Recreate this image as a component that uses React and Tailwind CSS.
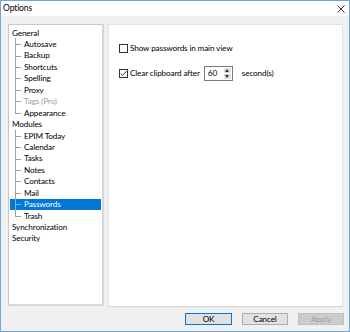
import React from "react";

const font = { fontFamily: '"Segoe UI", Lato, "Noto Sans", sans-serif' };

function Row({ label, level = 0, last = false, selected = false, disabled = false }) {
  return (
    <div
      className={`flex items-center h-[11.44px] ${selected ? "bg-[#0078d7] text-white" : disabled ? "text-[#a0a0a0]" : "text-[#000]"}`}
    >
      {level === 1 ? (
        <span className="relative self-stretch w-[9px] ml-[5px] shrink-0">
          <span className={`absolute left-0 top-0 w-px ${last ? "h-1/2" : "h-full"} ${selected ? "bg-[#7fb6e8]" : "bg-[#a0a0a0]"}`} />
          <span className={`absolute left-0 top-1/2 w-[6px] h-px ${selected ? "bg-[#7fb6e8]" : "bg-[#a0a0a0]"}`} />
        </span>
      ) : (
        <span className="w-[2px] shrink-0" />
      )}
      <span className="whitespace-nowrap leading-none">{label}</span>
    </div>
  );
}

function Checkbox({ checked }) {
  return (
    <span className="w-[9px] h-[9px] border border-[#333] bg-white flex items-center justify-center shrink-0">
      {checked && (
        <svg width="7" height="7" viewBox="0 0 7 7">
          <path d="M0.8 3.6 L2.7 5.5 L6.3 1.2" fill="none" stroke="#222" strokeWidth="0.9" />
        </svg>
      )}
    </span>
  );
}

export default function App() {
  return (
    <div
      className="w-[350px] h-[332px] border border-[#6ca7df] bg-[#f0f0f0] flex flex-col text-[8.2px] tracking-[-0.15px] select-none"
      style={font}
    >
      <div className="h-[15px] bg-white flex items-center justify-between pl-[2px] pr-[4px] shrink-0">
        <span className="text-[8.6px] text-black">Options</span>
        <svg width="8" height="8" viewBox="0 0 8 8">
          <path d="M0.5 0.5 L7.5 7.5 M7.5 0.5 L0.5 7.5" stroke="#333" strokeWidth="1" />
        </svg>
      </div>
      <div className="flex pl-[7px] pt-[8px] gap-[4px] shrink-0">
        <div className="w-[96px] h-[282px] bg-white border border-[#c8c8c8] border-r-[2px] border-b-[2px] border-r-[#d8d8d8] border-b-[#d8d8d8] pt-[1px] pl-px pr-px">
          <div className="pt-[1px]">
            <Row label="General" />
            <Row label="Autosave" level={1} />
            <Row label="Backup" level={1} />
            <Row label="Shortcuts" level={1} />
            <Row label="Spelling" level={1} />
            <Row label="Proxy" level={1} />
            <Row label="Tags (Pro)" level={1} disabled />
            <Row label="Appearance" level={1} last />
            <Row label="Modules" />
            <Row label="EPIM Today" level={1} />
            <Row label="Calendar" level={1} />
            <Row label="Tasks" level={1} />
            <Row label="Notes" level={1} />
            <Row label="Contacts" level={1} />
            <Row label="Mail" level={1} />
            <Row label="Passwords" level={1} selected />
            <Row label="Trash" level={1} last />
            <Row label="Synchronization" />
            <Row label="Security" />
          </div>
        </div>
        <div className="w-[235px] h-[283px] bg-white border border-[#e3e3e3] border-b-[#d4d4d4] pl-[10px] pt-[18px]">
          <div className="flex items-center gap-[2px] h-[10px]">
            <Checkbox />
            <span className="text-black leading-none">Show passwords in main view</span>
          </div>
          <div className="flex items-center mt-[13px] h-[15px]">
            <Checkbox checked />
            <span className="text-black leading-none ml-[2px]">Clear clipboard after</span>
            <div className="ml-[4px] w-[29px] h-[15px] border border-[#7a7a7a] bg-white flex">
              <span className="flex-1 pl-[3px] flex items-center text-black leading-none">60</span>
              <div className="w-[8px] flex flex-col gap-px py-px pr-px">
                <span className="flex-1 bg-[#e1e1e1] flex items-center justify-center">
                  <svg width="4" height="3" viewBox="0 0 4 3"><path d="M0 3 L2 0 L4 3 Z" fill="#333" /></svg>
                </span>
                <span className="flex-1 bg-[#e1e1e1] flex items-center justify-center">
                  <svg width="4" height="3" viewBox="0 0 4 3"><path d="M0 0 L2 3 L4 0 Z" fill="#333" /></svg>
                </span>
              </div>
            </div>
            <span className="ml-[9px] text-black leading-none">second(s)</span>
          </div>
        </div>
      </div>
      <div className="flex justify-end gap-[10px] pr-[5px] mt-[6px]">
        <button className="w-[47px] h-[12px] border-[1.5px] border-[#0078d7] bg-[#e1e1e1] text-black text-[8.2px] leading-none flex items-center justify-center">OK</button>
        <button className="w-[46px] h-[12px] border border-[#adadad] bg-[#e1e1e1] text-black text-[8.2px] leading-none flex items-center justify-center">Cancel</button>
        <button className="w-[46px] h-[12px] border border-[#bfbfbf] bg-[#cccccc] text-[#a0a0a0] text-[8.2px] leading-none flex items-center justify-center">Apply</button>
      </div>
    </div>
  );
}
